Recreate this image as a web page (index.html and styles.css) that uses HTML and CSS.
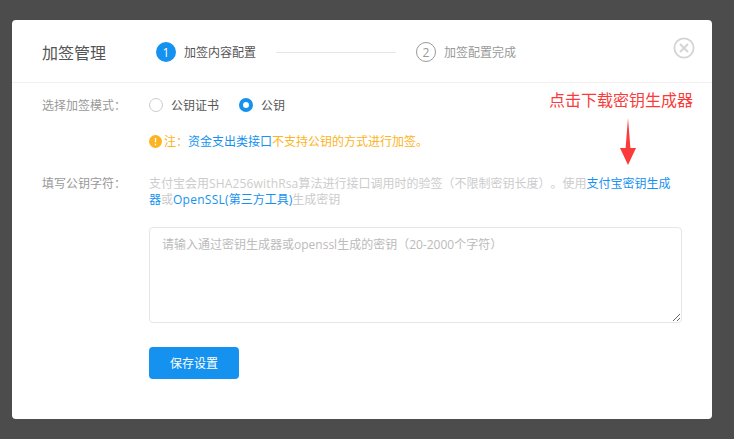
FILE: index.html
```html
<!DOCTYPE html>
<html lang="zh-CN">
<head>
<meta charset="utf-8">
<title>加签管理</title>
<link rel="stylesheet" href="styles.css">
</head>
<body>
<div class="modal">
  <header class="head">
    <h1 class="title">加签管理</h1>
    <div class="step step-on"><span class="num">1</span><span>加签内容配置</span></div>
    <div class="step-line"></div>
    <div class="step step-off"><span class="num">2</span><span>加签配置完成</span></div>
    <svg class="close" width="22" height="22" viewBox="0 0 22 22"><circle cx="11" cy="11" r="9.6" fill="none" stroke="#d4d4d4" stroke-width="1.8"/><path d="M7 7l8 8M15 7l-8 8" fill="none" stroke="#d4d4d4" stroke-width="1.8"/></svg>
  </header>
  <main class="body">
    <div class="row row-mode">
      <div class="label">选择加签模式：</div>
      <div class="radios">
        <span class="radio"><i class="dot"></i><span class="radio-text">公钥证书</span></span>
        <span class="radio"><i class="dot dot-on"></i><span class="radio-text">公钥</span></span>
      </div>
    </div>
    <div class="row row-note">
      <div class="label"></div>
      <div class="note"><svg class="warn" width="13" height="13" viewBox="0 0 13 13"><circle cx="6.5" cy="6.5" r="6.5" fill="#fdb322"/><path d="M6.5 3v4.2M6.5 8.8v1.4" stroke="#fff" stroke-width="1.3" fill="none"/></svg><span class="note-text">注：<a class="link">资金支出类接口</a>不支持公钥的方式进行加签。</span></div>
    </div>
    <div class="row row-key">
      <div class="label">填写公钥字符：</div>
      <div class="field">
        <p class="desc">支付宝会用<span class="latin">SHA256withRsa</span>算法进行接口调用时的验签（不限制密钥长度）。使用<a class="link">支付宝密钥生成器</a>或<a class="link"><span class="latin-wide">OpenSSL(</span>第三方工具)</a>生成密钥</p>
        <textarea class="input" placeholder="请输入通过密钥生成器或openssl生成的密钥（20-2000个字符）"></textarea>
        <button class="save" type="button">保存设置</button>
      </div>
    </div>
  </main>
  <div class="hint">点击下载密钥生成器</div>
  <svg class="arrow" width="16" height="47" viewBox="0 0 16 47"><path d="M8 0L10.4 30H16L8 47L0 30H5.6Z" fill="#fb3a3a"/></svg>
</div>
</body>
</html>
```
FILE: styles.css
```css
* { box-sizing: border-box; }
html, body { margin: 0; height: 100%; }
body {
  background: #4c4c4c;
  padding: 20px 22px 20px 12px;
  font-family: "Open Sans", "Noto Sans CJK SC", sans-serif;
  font-size: 12px;
  text-spacing-trim: space-all;
  overflow: hidden;
}
.modal {
  position: relative;
  width: 700px;
  height: 399px;
  background: #fff;
  border-radius: 4px;
}
.head {
  display: flex;
  align-items: center;
  height: 63px;
  padding: 2px 0 0 30px;
  border-bottom: 1px solid #f0f0f0;
}
.title {
  width: 114px;
  margin: 0;
  font-size: 16px;
  font-weight: 400;
  color: #555;
}
.step { display: flex; align-items: center; gap: 8px; white-space: nowrap; }
.num {
  display: flex;
  align-items: center;
  justify-content: center;
  width: 20px;
  height: 20px;
  border-radius: 50%;
}
.step-on { color: #555; width: 120px; }
.step-on .num { background: #1592ef; color: #fff; }
.step-off { color: #999; }
.step-off .num { border: 1px solid #999; color: #999; }
.step-line { width: 120px; height: 1px; background: #e6e6e6; margin-right: 20px; }
.close { position: absolute; top: 17px; right: 17px; }
.body { padding: 14px 30px 0; }
.row { display: flex; }
.label { width: 107px; flex: none; color: #999; line-height: 16px; padding-top: 1px; }
.row-mode { height: 16px; }
.radios { display: flex; gap: 20px; color: #555; line-height: 16px; }
.radio { display: flex; align-items: flex-start; gap: 8px; }
.radio-text { padding-top: 1px; }
.dot {
  width: 14px;
  height: 14px;
  margin-top: 1px;
  border: 1px solid #ccc;
  border-radius: 50%;
}
.dot-on { border: 4px solid #1592ef; }
.row-note { margin-top: 20px; height: 16px; }
.note { display: flex; align-items: flex-start; gap: 2px; color: #fdb322; line-height: 16px; }
.warn { margin-top: 2px; }
.note-text { padding-top: 1px; }
.link { color: #1592ef; }
.row-key { margin-top: 26px; }
.field { width: 533px; flex: none; }
.desc { margin: 0; padding-top: 1px; color: #ccc; line-height: 16px; }
.latin { letter-spacing: 0.16px; }
.latin-wide { letter-spacing: 0.25px; }
.input {
  display: block;
  width: 533px;
  height: 96px;
  margin-top: 19px;
  padding: 8px 12px;
  border: 1px solid #e6e6e6;
  border-radius: 4px;
  font: inherit;
  line-height: 18px;
  outline: 0;
}
.input::placeholder { color: #bbb; }
.save {
  display: block;
  width: 90px;
  height: 32px;
  margin-top: 24px;
  border: 0;
  border-radius: 4px;
  background: #1592ef;
  color: #fff;
  font: inherit;
}
.hint {
  position: absolute;
  top: 69px;
  left: 537px;
  color: #fb3a3a;
  font-size: 16px;
  line-height: 22px;
  white-space: nowrap;
}
.arrow { position: absolute; top: 98px; left: 608px; }
```
